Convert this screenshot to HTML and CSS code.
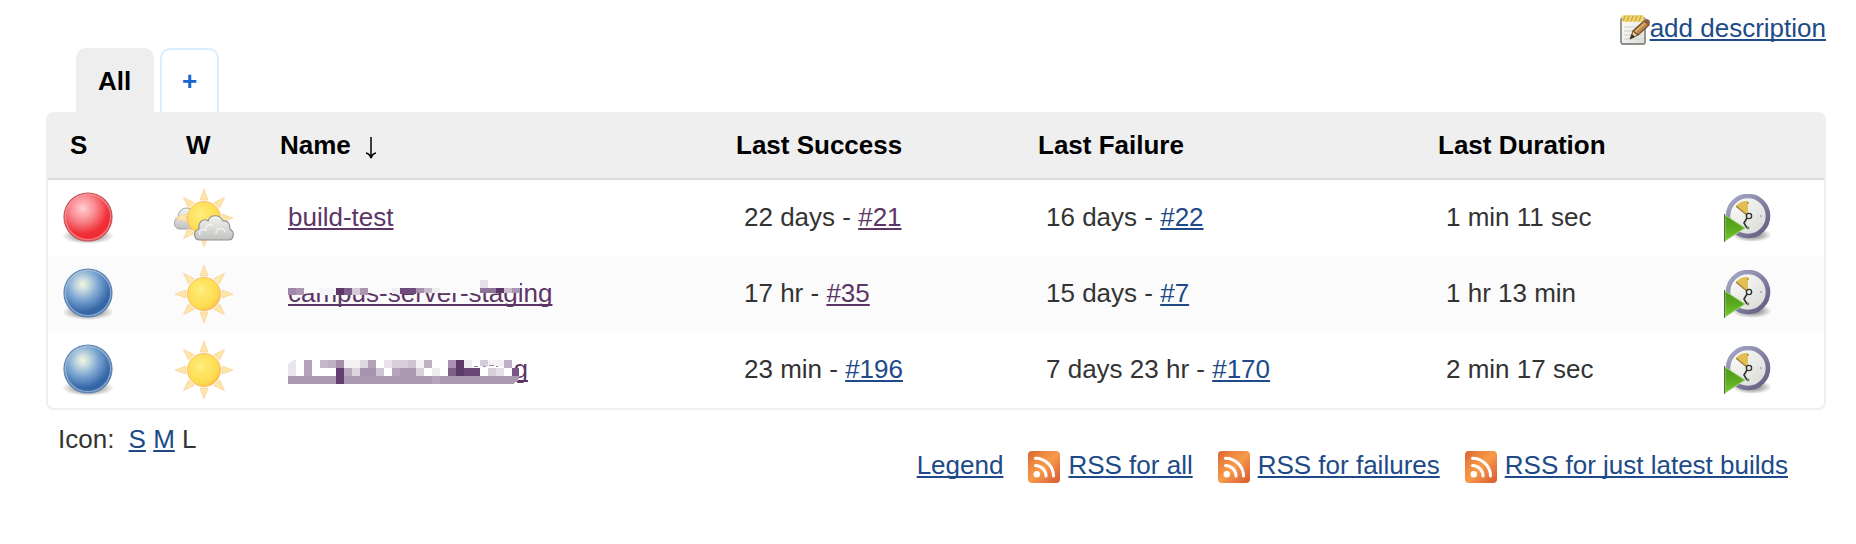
FILE: index.html
```
<!DOCTYPE html>
<html lang="en">
<head>
    <meta charset="UTF-8">
    <meta name="viewport" content="width=device-width, initial-scale=1.0">
    <title>Dashboard</title>
    <link rel="stylesheet" href="styles.css">
</head>
<body>
    <!-- Shared icons -->
    <svg class="sprite" aria-hidden="true">
        <defs>
            <radialGradient id="redFill" cx="0.39" cy="0.32" r="0.66">
                <stop offset="0" stop-color="#ffd0d4"/>
                <stop offset="0.4" stop-color="#f98a90"/>
                <stop offset="0.8" stop-color="#f03038"/>
                <stop offset="1" stop-color="#ef2a33"/>
            </radialGradient>
            <radialGradient id="blueFill" cx="0.39" cy="0.32" r="0.68">
                <stop offset="0" stop-color="#f4f6dc"/>
                <stop offset="0.2" stop-color="#c4d8de"/>
                <stop offset="0.48" stop-color="#7ba5d2"/>
                <stop offset="0.85" stop-color="#3566a6"/>
                <stop offset="1" stop-color="#3465a4"/>
            </radialGradient>
            <radialGradient id="shadow">
                <stop offset="0" stop-color="#000" stop-opacity="0.6"/>
                <stop offset="0.6" stop-color="#000" stop-opacity="0.25"/>
                <stop offset="1" stop-color="#000" stop-opacity="0"/>
            </radialGradient>
            <radialGradient id="sunFill" cx="0.4" cy="0.38" r="0.65">
                <stop offset="0" stop-color="#fff08a"/>
                <stop offset="0.3" stop-color="#ffe668"/>
                <stop offset="0.8" stop-color="#fddb50"/>
                <stop offset="1" stop-color="#fbbf48"/>
            </radialGradient>
            <linearGradient id="cloudFill" x1="0" y1="0" x2="0" y2="1">
                <stop offset="0" stop-color="#f4f4f2"/>
                <stop offset="1" stop-color="#c2c2c0"/>
            </linearGradient>
            <linearGradient id="rimFill" x1="0" y1="0" x2="1" y2="1">
                <stop offset="0" stop-color="#a9abc8"/>
                <stop offset="1" stop-color="#5f5a80"/>
            </linearGradient>
            <linearGradient id="faceFill" x1="0" y1="0" x2="1" y2="1">
                <stop offset="0" stop-color="#ffffff"/>
                <stop offset="1" stop-color="#d6d6d2"/>
            </linearGradient>
            <linearGradient id="playFill" x1="0" y1="0" x2="0" y2="1">
                <stop offset="0" stop-color="#4c9a18"/>
                <stop offset="0.5" stop-color="#5aaa1e"/>
                <stop offset="1" stop-color="#74cc2c"/>
            </linearGradient>
            <linearGradient id="rssFill" x1="0" y1="0" x2="1" y2="1">
                <stop offset="0" stop-color="#d9622f"/>
                <stop offset="0.25" stop-color="#ec8440"/>
                <stop offset="0.5" stop-color="#f79b48"/>
                <stop offset="0.75" stop-color="#e67840"/>
                <stop offset="1" stop-color="#d65b2c"/>
            </linearGradient>
            <linearGradient id="padFill" x1="0" y1="0" x2="1" y2="1">
                <stop offset="0" stop-color="#ffffff"/>
                <stop offset="1" stop-color="#dcdcd8"/>
            </linearGradient>
        </defs>

        <symbol id="ball-red" viewBox="0 0 60 60">
            <ellipse cx="30" cy="48" rx="26" ry="8" fill="url(#shadow)"/>
            <circle cx="30" cy="29" r="24" fill="url(#redFill)" stroke="#c4585d" stroke-width="1.2"/>
            <circle cx="30" cy="29" r="22.6" fill="none" stroke="#fb9ea2" stroke-width="1.2" stroke-opacity="0.7"/>
        </symbol>
        <symbol id="ball-blue" viewBox="0 0 60 60">
            <ellipse cx="30" cy="48" rx="26" ry="8" fill="url(#shadow)"/>
            <circle cx="30" cy="29" r="24" fill="url(#blueFill)" stroke="#6486b0" stroke-width="1.2"/>
            <circle cx="30" cy="29" r="22.6" fill="none" stroke="#a9c6e4" stroke-width="1.2" stroke-opacity="0.7"/>
        </symbol>
        <symbol id="sun" viewBox="0 0 60 60">
            <g fill="#fde6a6" stroke="#fad0a0" stroke-width="0.7">
                <path d="M26 12 L30 1 L34 12 Z"/>
                <path d="M26 12 L30 1 L34 12 Z" transform="rotate(45 30 30)"/>
                <path d="M26 12 L30 1 L34 12 Z" transform="rotate(90 30 30)"/>
                <path d="M26 12 L30 1 L34 12 Z" transform="rotate(135 30 30)"/>
                <path d="M26 12 L30 1 L34 12 Z" transform="rotate(180 30 30)"/>
                <path d="M26 12 L30 1 L34 12 Z" transform="rotate(225 30 30)"/>
                <path d="M26 12 L30 1 L34 12 Z" transform="rotate(270 30 30)"/>
                <path d="M26 12 L30 1 L34 12 Z" transform="rotate(315 30 30)"/>
            </g>
            <circle cx="30" cy="30" r="16.5" fill="url(#sunFill)" stroke="#fbc06a" stroke-width="1"/>
        </symbol>
        <symbol id="sun-cloud" viewBox="0 0 60 60">
            <path d="M5 41 C-1 40 -1 31 4 30 C4 20 13 18 18 22 L22 41 Z" fill="url(#cloudFill)" stroke="#a3a3a0" stroke-width="1"/>
            <use href="#sun" width="60" height="60"/>
            <path d="M26 52 C19 52 19 42 25 41 C24 33 30 30 34 33 C36 26 46 26 49 33 C54 32 56 36 56 41 C61 44 60 52 54 52 Z" fill="url(#cloudFill)" stroke="#92928f" stroke-width="1.2"/>
            <path d="M26 47 C24 42 30 40 32 43 C31 37 37 35 39 38 M42 46 C42 39 50 39 51 44" fill="none" stroke="#ffffff" stroke-width="1.5" stroke-opacity="0.6"/>
        </symbol>
        <symbol id="clock" viewBox="0 0 48 48">
            <ellipse cx="28" cy="41" rx="20" ry="7" fill="url(#shadow)"/>
            <circle cx="24" cy="22" r="20" fill="url(#faceFill)" stroke="url(#rimFill)" stroke-width="4.6"/>
            <path d="M24 21 L12 12 A14 14 0 0 1 24 7 Z" fill="#e2bf52"/>
            <path d="M12 12 L24 22" stroke="#9a7b28" stroke-width="1.2"/>
            <path d="M23 24 L20 29 L23 34" fill="none" stroke="#2e3436" stroke-width="1.6"/>
            <circle cx="25" cy="22" r="2.6" fill="#eeeeec" stroke="#2e3436" stroke-width="1.4"/>
            <circle cx="37" cy="22" r="1.1" fill="#aaaaaa"/>
            <circle cx="24" cy="34" r="1.4" fill="#6b8a5a"/>
            <circle cx="24" cy="9" r="1" fill="#b09040"/>
            <path d="M1 21 L21 34 L1 47 Z" fill="url(#playFill)" stroke="#a6d68a" stroke-width="1"/>
            <path d="M0.5 20 L0.5 48" stroke="#4d6b3c" stroke-width="1"/>
        </symbol>
        <symbol id="rss" viewBox="0 0 32 32">
            <rect width="32" height="32" rx="4" fill="url(#rssFill)"/>
            <circle cx="8.8" cy="23.2" r="3.2" fill="#fff"/>
            <path d="M7.5 14.5 A10.5 10.5 0 0 1 18 25" fill="none" stroke="#fff" stroke-width="3" stroke-linecap="round"/>
            <path d="M7.5 7.2 A18 18 0 0 1 25.5 25" fill="none" stroke="#fff" stroke-width="3" stroke-linecap="round"/>
        </symbol>
        <symbol id="notepad" viewBox="0 0 32 32">
            <rect x="3" y="4" width="24" height="26" rx="2" fill="url(#padFill)" stroke="#8c8c88" stroke-width="1.8"/>
            <path d="M6 13 H23 M6 17 H23 M6 21 H23 M6 25 H23" stroke="#cfcfcb" stroke-width="1"/>
            <rect x="4" y="1" width="22" height="7" rx="2" fill="#edd67c"/>
            <path d="M5 7 L7 2 M9 7 L11 2 M13 7 L15 2 M17 7 L19 2 M21 7 L23 2" stroke="#d3b138" stroke-width="1.6"/>
            <path d="M12 25 L15 17 L20 21 Z" fill="#e8d3a8" stroke="#6b4c28" stroke-width="1"/>
            <path d="M12 25 L14 20 L17 23 Z" fill="#33302c"/>
            <path d="M15 17 L26 7 L31 11 L20 21 Z" fill="#bd8a4c" stroke="#6f4b26" stroke-width="1.2"/>
            <path d="M17 18 L27 9" stroke="#e0b478" stroke-width="1.6"/>
            <path d="M26 7 L28 5 Q32 5 32 9 L31 11 Z" fill="#8d5f40"/>
        </symbol>
        <symbol id="arrow-down" viewBox="0 0 12 24">
            <path d="M6 1 V22" fill="none" stroke="#000" stroke-width="1.5"/>
            <path d="M1 17 Q5 18 6 22 Q7 18 11 17" fill="none" stroke="#000" stroke-width="1.8"/>
        </symbol>
    </svg>

    <div class="description">
        <svg class="icon-edit"><use href="#notepad"/></svg><a href="#">add description</a>
    </div>

    <nav class="tabs">
        <a class="tab active" href="#">All</a>
        <a class="tab new" href="#">+</a>
    </nav>

    <table class="jobs">
        <colgroup>
            <col class="col-status">
            <col class="col-weather">
            <col class="col-name">
            <col class="col-success">
            <col class="col-failure">
            <col class="col-duration">
            <col class="col-build">
        </colgroup>
        <thead>
            <tr>
                <th>S</th>
                <th>W</th>
                <th><div class="sorted">Name <svg class="sort" role="img" aria-label="sorted descending"><use href="#arrow-down"/></svg></div></th>
                <th>Last Success</th>
                <th>Last Failure</th>
                <th>Last Duration</th>
                <th></th>
            </tr>
        </thead>
        <tbody>
            <tr>
                <td class="icon"><svg class="icon-l" role="img" aria-label="Failed"><use href="#ball-red"/></svg></td>
                <td class="icon"><svg class="icon-l" role="img" aria-label="Partly cloudy"><use href="#sun-cloud"/></svg></td>
                <td><a class="visited" href="#">build-test</a></td>
                <td>22 days - <a class="visited" href="#">#21</a></td>
                <td>16 days - <a href="#">#22</a></td>
                <td>1 min 11 sec</td>
                <td class="build"><button type="button" aria-label="Schedule a build"><svg class="icon-m"><use href="#clock"/></svg></button></td>
            </tr>
            <tr>
                <td class="icon"><svg class="icon-l" role="img" aria-label="Success"><use href="#ball-blue"/></svg></td>
                <td class="icon"><svg class="icon-l" role="img" aria-label="Sunny"><use href="#sun"/></svg></td>
                <td>
                    <a class="visited masked" href="#">campus-server-staging
                        <svg class="mosaic" viewBox="0 0 232 24" shape-rendering="crispEdges" aria-hidden="true">
                            <rect y="0" width="232" height="13" fill="#fbfbfb"/>
                            <rect x="0" y="8" width="8" height="7" fill="#a088a8"/>
                            <rect x="8" y="8" width="8" height="7" fill="#ab97b2"/>
                            <rect x="32" y="8" width="16" height="7" fill="#f5f4f6"/>
                            <rect x="48" y="8" width="8" height="7" fill="#5c3768"/>
                            <rect x="56" y="8" width="8" height="7" fill="#7d5f87"/>
                            <rect x="64" y="8" width="8" height="7" fill="#d6cbda"/>
                            <rect x="72" y="8" width="8" height="7" fill="#ab95b1"/>
                            <rect x="104" y="8" width="8" height="6" fill="#f0edf1"/>
                            <rect x="112" y="8" width="16" height="6" fill="#6f4d7a"/>
                            <rect x="128" y="8" width="8" height="5" fill="#a88fae"/>
                            <rect x="136" y="8" width="8" height="5" fill="#c9bccd"/>
                            <rect x="144" y="8" width="8" height="5" fill="#f0edf1"/>
                            <rect x="192" y="0" width="8" height="8" fill="#e6e0e8"/>
                            <rect x="192" y="8" width="16" height="5" fill="#8f7297"/>
                            <rect x="208" y="8" width="8" height="5" fill="#5c3768"/>
                            <rect x="216" y="8" width="8" height="5" fill="#c9bccf"/>
                            <rect x="224" y="8" width="8" height="5" fill="#ab97b1"/>
                        </svg>
                    </a>
                </td>
                <td>17 hr - <a class="visited" href="#">#35</a></td>
                <td>15 days - <a href="#">#7</a></td>
                <td>1 hr 13 min</td>
                <td class="build"><button type="button" aria-label="Schedule a build"><svg class="icon-m"><use href="#clock"/></svg></button></td>
            </tr>
            <tr>
                <td class="icon"><svg class="icon-l" role="img" aria-label="Success"><use href="#ball-blue"/></svg></td>
                <td class="icon"><svg class="icon-l" role="img" aria-label="Sunny"><use href="#sun"/></svg></td>
                <td>
                    <a class="visited masked tail" href="#">g
                        <svg class="mosaic" viewBox="0 0 232 24" shape-rendering="crispEdges" aria-hidden="true">
                            <path d="M8 0 H224 V8 H232 Q232 20 224 24 H0 V8 Q0 0 8 0 Z" fill="#fff"/>
                            <path d="M8 0 V16 H0 V8 Q0 0 8 0 Z" fill="#ebe5ed"/>
                            <path d="M0 16 H232 Q231 21 225 24 H0 Z" fill="#ab98b1"/>
                            <rect x="16" y="0" width="8" height="16" fill="#b5a3bb"/>
                            <rect x="32" y="0" width="8" height="8" fill="#c6b7ca"/>
                            <rect x="40" y="0" width="8" height="8" fill="#c0b0c5"/>
                            <rect x="48" y="0" width="8" height="8" fill="#a38fac"/>
                            <rect x="56" y="0" width="16" height="8" fill="#f2f0f3"/>
                            <rect x="72" y="0" width="8" height="8" fill="#dfd7e1"/>
                            <rect x="80" y="0" width="8" height="8" fill="#b5a3ba"/>
                            <rect x="96" y="0" width="8" height="8" fill="#e8e2ea"/>
                            <rect x="104" y="0" width="16" height="8" fill="#d8cfdb"/>
                            <rect x="120" y="0" width="8" height="8" fill="#cfc4d3"/>
                            <rect x="128" y="0" width="8" height="8" fill="#f4f2f4"/>
                            <rect x="136" y="0" width="8" height="8" fill="#c0b1c5"/>
                            <rect x="160" y="0" width="8" height="8" fill="#ab93b3"/>
                            <rect x="168" y="0" width="8" height="8" fill="#5d3a6a"/>
                            <rect x="176" y="0" width="8" height="8" fill="#efecf1"/>
                            <rect x="192" y="0" width="8" height="6" fill="#d5ccd9"/>
                            <rect x="200" y="0" width="16" height="6" fill="#f4f2f5"/>
                            <rect x="216" y="0" width="8" height="8" fill="#c0b0c6"/>
                            <rect x="48" y="8" width="8" height="16" fill="#663f72"/>
                            <rect x="56" y="8" width="8" height="8" fill="#b8a9be"/>
                            <rect x="64" y="8" width="8" height="8" fill="#dcd3df"/>
                            <rect x="72" y="8" width="16" height="8" fill="#a692ae"/>
                            <rect x="88" y="8" width="8" height="8" fill="#cfc5d2"/>
                            <rect x="104" y="8" width="8" height="8" fill="#b6a4bc"/>
                            <rect x="112" y="8" width="16" height="8" fill="#aa98b1"/>
                            <rect x="128" y="8" width="8" height="8" fill="#dad0dd"/>
                            <rect x="144" y="8" width="8" height="8" fill="#efecf0"/>
                            <rect x="144" y="16" width="8" height="8" fill="#b5a4ba"/>
                            <rect x="160" y="8" width="8" height="8" fill="#7d5f87"/>
                            <rect x="168" y="8" width="8" height="8" fill="#5f3b6b"/>
                            <rect x="176" y="8" width="16" height="8" fill="#694675"/>
                            <rect x="186" y="6" width="4" height="1" fill="#9a86a2"/>
                            <rect x="195" y="6" width="3" height="1" fill="#9a86a2"/>
                            <rect x="201" y="5" width="5" height="1" fill="#9a86a2"/>
                            <rect x="208" y="6" width="2" height="1" fill="#9a86a2"/>
                            <rect x="200" y="8" width="8" height="8" fill="#d9cfdc"/>
                            <rect x="208" y="8" width="8" height="8" fill="#e4dee6"/>
                            <rect x="224" y="8" width="7" height="8" fill="#7a5886"/>
                        </svg>
                    </a>
                </td>
                <td>23 min - <a href="#">#196</a></td>
                <td>7 days 23 hr - <a href="#">#170</a></td>
                <td>2 min 17 sec</td>
                <td class="build"><button type="button" aria-label="Schedule a build"><svg class="icon-m"><use href="#clock"/></svg></button></td>
            </tr>
        </tbody>
    </table>

    <footer class="footer">
        <div class="icon-size">Icon: <span class="sizes"><a href="#">S</a> <a href="#">M</a> L</span></div>
        <div class="feeds">
            <a href="#">Legend</a>
            <span class="feed"><svg class="icon-s"><use href="#rss"/></svg><a href="#">RSS for all</a></span>
            <span class="feed"><svg class="icon-s"><use href="#rss"/></svg><a href="#">RSS for failures</a></span>
            <span class="feed"><svg class="icon-s"><use href="#rss"/></svg><a href="#">RSS for just latest builds</a></span>
        </div>
    </footer>
</body>
</html>
```
FILE: styles.css
```
* {
    box-sizing: border-box;
}
body {
    margin: 0;
    padding: 12px 30px 40px 46px;
    background-color: #fff;
    color: #333;
    font-family: "Liberation Sans", Helvetica, Arial, sans-serif;
    font-size: 26px;
    line-height: 32px;
}
a {
    color: #204a87;
    text-decoration: underline;
    text-decoration-thickness: 2px;
    text-decoration-skip-ink: none;
    text-underline-offset: 2px;
}
a.visited {
    color: #5c3566;
}
svg {
    display: block;
    flex: none;
}
.sprite {
    position: absolute;
    width: 0;
    height: 0;
}
.icon-l {
    width: 60px;
    height: 60px;
}
.icon-m {
    width: 48px;
    height: 48px;
}
.icon-s,
.icon-edit {
    width: 32px;
    height: 32px;
    margin-top: 2px;
}

/* top bar */
.description {
    display: flex;
    justify-content: flex-end;
    height: 36px;
}

/* view tabs */
.tabs {
    display: flex;
    gap: 6px;
    padding-left: 30px;
}
.tab {
    height: 64px;
    padding: 15px 20px;
    border: 2px solid #d9edff;
    border-bottom: 0;
    border-radius: 10px 10px 0 0;
    color: #1464d2;
    font-weight: bold;
    text-decoration: none;
}
.tab.active {
    min-width: 78px;
    background-color: #eee;
    border-color: #eee;
    color: #000;
}

/* job list */
.jobs {
    width: 100%;
    table-layout: fixed;
    border: 2px solid #efefef;
    border-radius: 8px;
    border-spacing: 0;
}
.col-status {
    width: 116px;
}
.col-weather {
    width: 94px;
}
.col-name {
    width: 456px;
}
.col-success {
    width: 302px;
}
.col-failure {
    width: 400px;
}
.col-duration {
    width: 284px;
}
.col-build {
    width: 124px;
}
.jobs th {
    height: 66px;
    padding: 0 0 2px 22px;
    background-color: #efefef;
    border-bottom: 2px solid #dcdcdc;
    color: #000;
    text-align: left;
}
.jobs td {
    height: 76px;
    padding: 0 0 2px 30px;
}
.jobs td.icon {
    padding: 0 0 0 10px;
}
.jobs td.build {
    padding: 0 0 0 24px;
}
.jobs tbody tr:nth-child(even) {
    background-color: #fbfbfb;
}
.sorted {
    display: flex;
    align-items: center;
    gap: 14px;
}
.sort {
    width: 12px;
    height: 24px;
    margin-top: 6px;
}
.build button {
    display: block;
    padding: 0;
    border: 0;
    background: none;
    cursor: pointer;
}
.masked {
    position: relative;
    display: inline-block;
}
.masked.tail {
    width: 240px;
    text-align: right;
}
.mosaic {
    position: absolute;
    top: 3px;
    left: 0;
    width: 232px;
    height: 24px;
}
.tail .mosaic {
    top: 7px;
}

/* footer */
.footer {
    display: flex;
    justify-content: space-between;
    padding: 13px 38px 0 12px;
}
.sizes {
    margin-left: 7px;
}
.feeds {
    display: flex;
    gap: 25px;
    padding-top: 26px;
}
.feed {
    display: flex;
    gap: 8px;
}
```
